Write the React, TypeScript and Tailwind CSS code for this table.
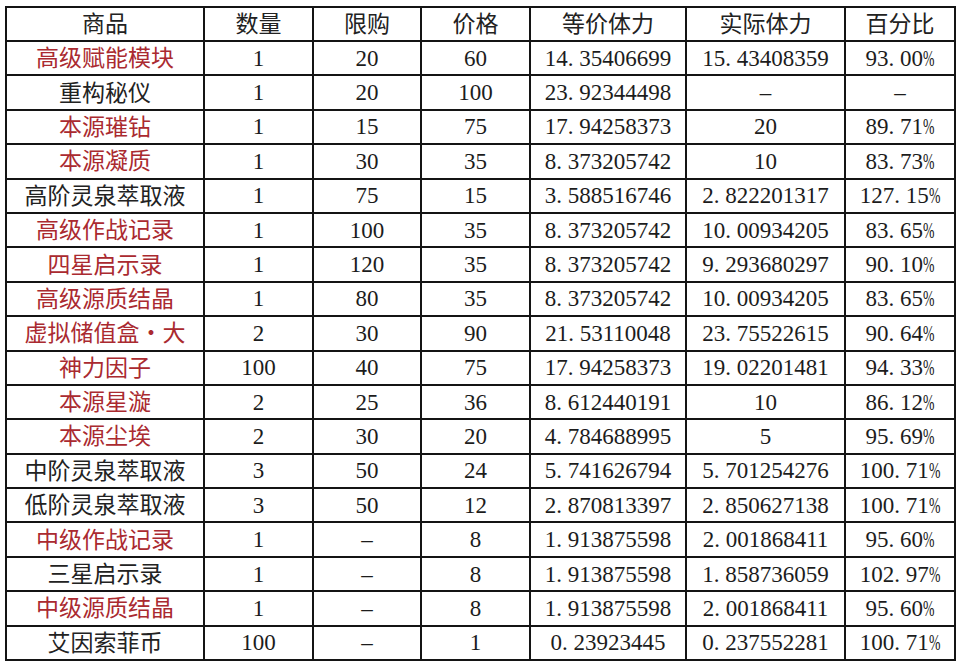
const rows: [string, boolean, string, string, string, string, string, string][] = [
  ["高级赋能模块", true, "1", "20", "60", "14.35406699", "15.43408359", "93.00%"],
  ["重构秘仪", false, "1", "20", "100", "23.92344498", "–", "–"],
  ["本源璀钻", true, "1", "15", "75", "17.94258373", "20", "89.71%"],
  ["本源凝质", true, "1", "30", "35", "8.373205742", "10", "83.73%"],
  ["高阶灵泉萃取液", false, "1", "75", "15", "3.588516746", "2.822201317", "127.15%"],
  ["高级作战记录", true, "1", "100", "35", "8.373205742", "10.00934205", "83.65%"],
  ["四星启示录", true, "1", "120", "35", "8.373205742", "9.293680297", "90.10%"],
  ["高级源质结晶", true, "1", "80", "35", "8.373205742", "10.00934205", "83.65%"],
  ["虚拟储值盒•大", true, "2", "30", "90", "21.53110048", "23.75522615", "90.64%"],
  ["神力因子", true, "100", "40", "75", "17.94258373", "19.02201481", "94.33%"],
  ["本源星漩", true, "2", "25", "36", "8.612440191", "10", "86.12%"],
  ["本源尘埃", true, "2", "30", "20", "4.784688995", "5", "95.69%"],
  ["中阶灵泉萃取液", false, "3", "50", "24", "5.741626794", "5.701254276", "100.71%"],
  ["低阶灵泉萃取液", false, "3", "50", "12", "2.870813397", "2.850627138", "100.71%"],
  ["中级作战记录", true, "1", "–", "8", "1.913875598", "2.001868411", "95.60%"],
  ["三星启示录", false, "1", "–", "8", "1.913875598", "1.858736059", "102.97%"],
  ["中级源质结晶", true, "1", "–", "8", "1.913875598", "2.001868411", "95.60%"],
  ["艾因索菲币", false, "100", "–", "1", "0.23923445", "0.237552281", "100.71%"],
];

const headers = ["商品", "数量", "限购", "价格", "等价体力", "实际体力", "百分比"];

// SimSun-style number: period and percent take a half-em cell
function Num({ v }: { v: string }) {
  const pct = v.endsWith("%");
  const body = pct ? v.slice(0, -1) : v;
  const [a, b] = body.split(".");
  return (
    <span className="whitespace-nowrap">
      {a}
      {b !== undefined && (
        <>
          <span className="inline-block w-[0.5em] text-left">.</span>
          {b}
        </>
      )}
      {pct && (
        <span className="inline-block w-[0.5em] text-left">
          <span className="inline-block origin-left scale-x-[0.6]">%</span>
        </span>
      )}
    </span>
  );
}

function Name({ v }: { v: string }) {
  if (!v.includes("•")) return <>{v}</>;
  const [a, b] = v.split("•");
  return (
    <>
      {a}
      <span className="inline-block w-[1em] text-center">•</span>
      {b}
    </>
  );
}

const cell = "border-2 border-[#141414] text-center align-middle p-0 leading-none";
const cjk = "font-['Noto_Sans_CJK_SC',sans-serif] text-[23px] pb-[3px]";
const num = "font-['Liberation_Serif','Noto_Sans_CJK_SC',serif] text-[23px] text-[#1c1c1c]";

export default function App() {
  return (
    <div className="w-[960px] h-[666px] bg-white overflow-hidden">
      <table className="ml-[5px] mt-[6px] w-[949px] table-fixed border-collapse">
        <colgroup>
          <col className="w-[198px]" />
          <col className="w-[109px]" />
          <col className="w-[108px]" />
          <col className="w-[109px]" />
          <col className="w-[156px]" />
          <col className="w-[159px]" />
          <col className="w-[110px]" />
        </colgroup>
        <thead>
          <tr className="h-[34px]">
            {headers.map((h) => (
              <th key={h} className={`${cell} ${cjk} font-normal text-[#222]`}>
                {h}
              </th>
            ))}
          </tr>
        </thead>
        <tbody>
          {rows.map((r) => (
            <tr key={r[0]} className="h-[34.4px]">
              <td className={`${cell} ${cjk} ${r[1] ? "text-[#aa2a30]" : "text-[#222]"}`}>
                <Name v={r[0]} />
              </td>
              {r.slice(2).map((c, i) => (
                <td key={i} className={`${cell} ${num}`}>
                  <Num v={c as string} />
                </td>
              ))}
            </tr>
          ))}
        </tbody>
      </table>
    </div>
  );
}
